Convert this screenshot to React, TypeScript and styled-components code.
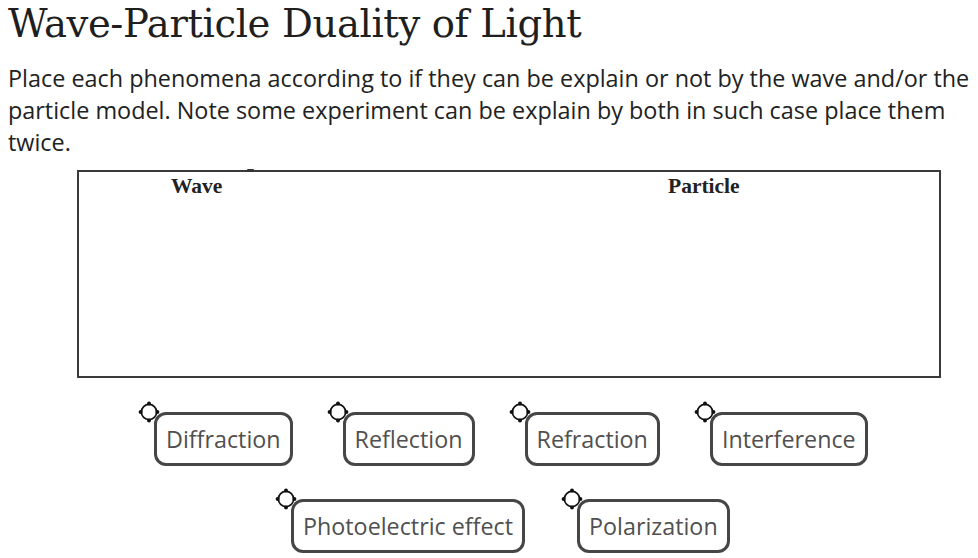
import React from 'react';
import styled, { createGlobalStyle } from 'styled-components';

const Global = createGlobalStyle`
  html, body { margin: 0; padding: 0; background: #fff; }
  body { width: 978px; height: 558px; overflow: hidden; }
`;

const Page = styled.div`
  padding: 0 0 0 8px;
  color: #222;
`;

const Title = styled.h1`
  margin: 0;
  padding-top: 2px;
  font-family: "DejaVu Serif", serif;
  font-weight: 400;
  font-size: 38.6px;
  line-height: 44px;
  letter-spacing: -0.4px;
  color: #1f1f1f;
`;

const Prompt = styled.p`
  margin: 16px 0 0 0;
  font-family: "Open Sans", sans-serif;
  font-size: 23.4px;
  line-height: 32px;
  color: #222;
  width: 970px;
`;

const DropZone = styled.div`
  position: relative;
  margin: 12px 0 0 69px;
  width: 860px;
  height: 204px;
  border: 2px solid #3a3a3a;
  display: grid;
  grid-template-columns: 1fr 1fr;
`;

const ColumnHead = styled.div<{ $offset: number }>`
  font-family: "Liberation Serif", serif;
  font-weight: 700;
  font-size: 21.5px;
  color: #222;
  padding: 2px 0 0 ${p => p.$offset}px;
`;

const Tick = styled.span`
  position: absolute;
  top: -3px;
  left: 168px;
  width: 7px;
  height: 3px;
  background: #333;
  border-radius: 1px;
`;

const Tray = styled.div`
  display: flex;
  flex-direction: column;
  gap: 21px;
  margin-top: 22px;
`;

const TrayRow = styled.div<{ $gap: number; $shift: number }>`
  display: flex;
  gap: ${p => p.$gap}px;
  padding-left: ${p => p.$shift}px;
`;

const Item = styled.div`
  position: relative;
  padding: 12px 0 0 17px;
`;

const Handle = styled.svg`
  position: absolute;
  left: 0;
  top: 0;
`;

const Chip = styled.div`
  height: 48px;
  padding: 0 9px;
  border: 3px solid #464646;
  border-radius: 12px;
  display: flex;
  align-items: center;
  font-family: "Open Sans", sans-serif;
  font-size: 23.3px;
  color: #505050;
  background: #fff;
`;

const DragHandle = () => (
  <Handle width="24" height="24" viewBox="0 0 24 24">
    <circle cx="12" cy="12" r="7.6" fill="#fff" stroke="#111" strokeWidth="1.7" />
    <circle cx="12" cy="3.6" r="2" fill="#111" />
    <circle cx="12" cy="20.4" r="2" fill="#111" />
    <circle cx="3.6" cy="12" r="2" fill="#111" />
    <circle cx="20.4" cy="12" r="2" fill="#111" />
  </Handle>
);

const Phenomenon = ({ label }: { label: string }) => (
  <Item>
    <DragHandle />
    <Chip>{label}</Chip>
  </Item>
);

export default function App() {
  return (
    <>
      <Global />
      <Page>
        <Title>Wave-Particle Duality of Light</Title>
        <Prompt>
          Place each phenomena according to if they can be explain or not by the wave and/or the particle
          model. Note some experiment can be explain by both in such case place them twice.
        </Prompt>
        <DropZone>
          <Tick />
          <ColumnHead $offset={92}>Wave</ColumnHead>
          <ColumnHead $offset={159}>Particle</ColumnHead>
        </DropZone>
        <Tray>
          <TrayRow $gap={33} $shift={129}>
            <Phenomenon label="Diffraction" />
            <Phenomenon label="Reflection" />
            <Phenomenon label="Refraction" />
            <Phenomenon label="Interference" />
          </TrayRow>
          <TrayRow $gap={35} $shift={266}>
            <Phenomenon label="Photoelectric effect" />
            <Phenomenon label="Polarization" />
          </TrayRow>
        </Tray>
      </Page>
    </>
  );
}
